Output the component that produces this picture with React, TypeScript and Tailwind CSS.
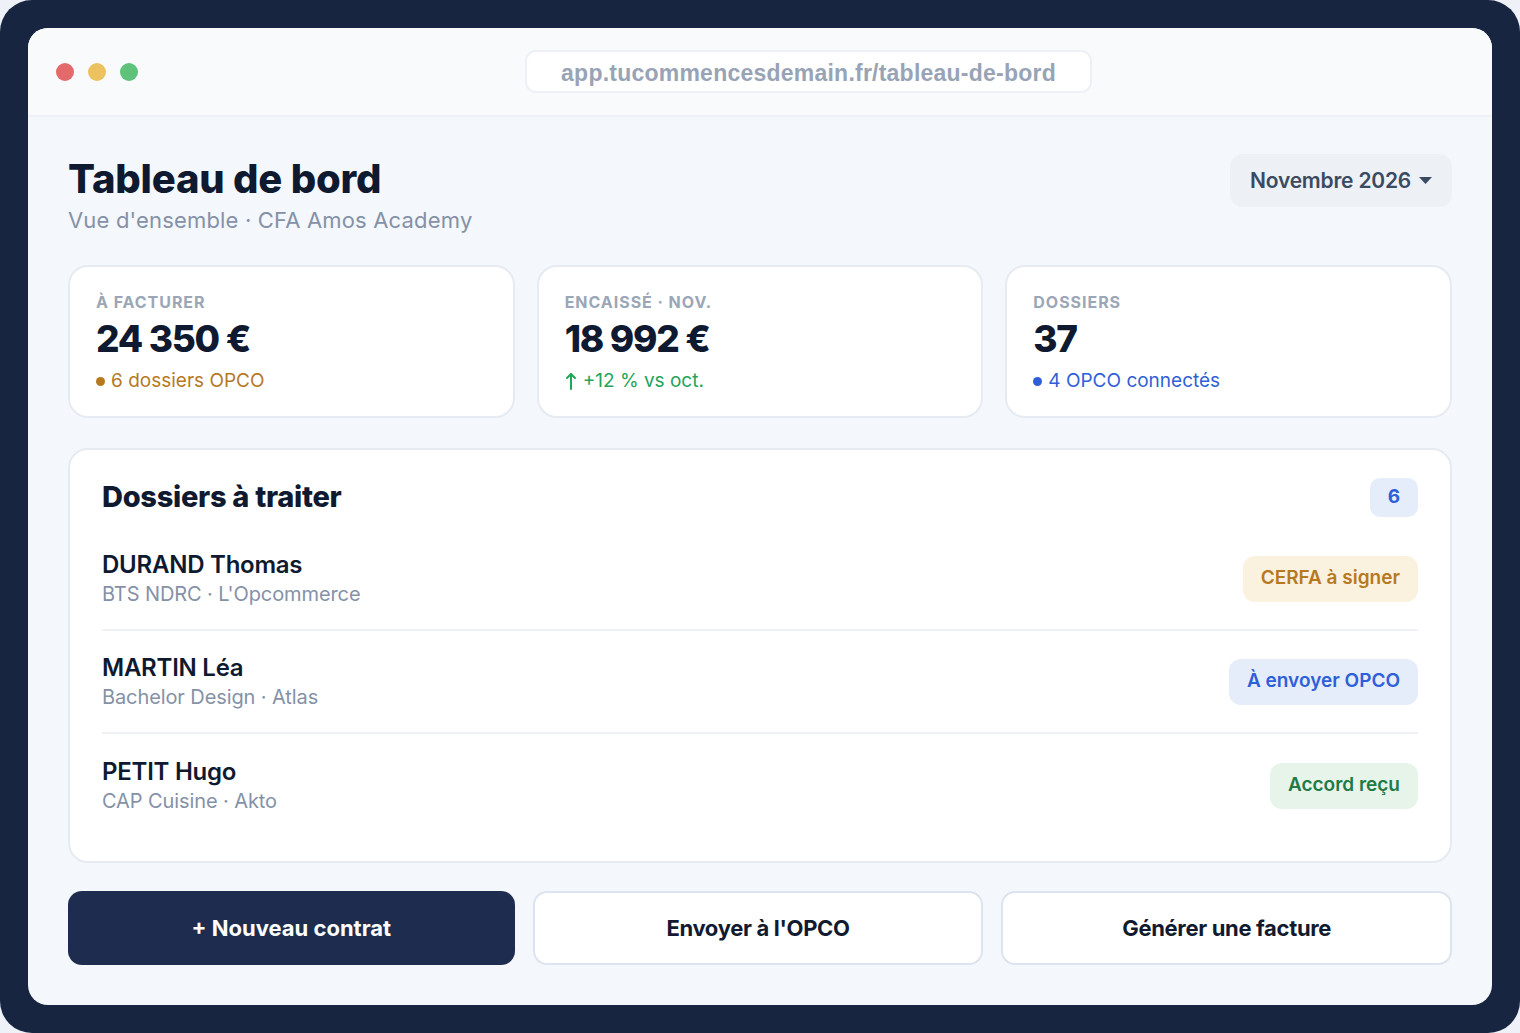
import React from "react";

const sans = { fontFamily: "Inter, 'Noto Sans', sans-serif" } as const;

type Row = { name: string; sub: string; label: string; tone: "amber" | "blue" | "green" };

const rows: Row[] = [
  { name: "DURAND Thomas", sub: "BTS NDRC · L'Opcommerce", label: "CERFA à signer", tone: "amber" },
  { name: "MARTIN Léa", sub: "Bachelor Design · Atlas", label: "À envoyer OPCO", tone: "blue" },
  { name: "PETIT Hugo", sub: "CAP Cuisine · Akto", label: "Accord reçu", tone: "green" },
];

const toneClass: Record<Row["tone"], string> = {
  amber: "bg-[#fbf1df] text-[#b7791f]",
  blue: "bg-[#e5edfb] text-[#2f5fd8]",
  green: "bg-[#e6f4ea] text-[#1f7a46]",
};

function StatCard({
  label,
  value,
  note,
  noteClass,
  icon,
}: {
  label: string;
  value: string;
  note: string;
  noteClass: string;
  icon: React.ReactNode;
}) {
  return (
    <div className="flex-1 h-[153px] rounded-[20px] border-2 border-[#e6ebf2] bg-white pl-[26px] pt-[24px]">
      <div className="text-[16px] font-bold uppercase tracking-[0.06em] leading-[22px] text-[#9ba6b6]">{label}</div>
      <div className="mt-[5px] text-[37px] font-extrabold leading-[42px] tracking-[-0.035em] text-[#0f1a30]">{value}</div>
      <div className={`mt-[9px] flex items-center gap-[6px] text-[19px] leading-[24px] ${noteClass}`}>
        {icon}
        <span>{note}</span>
      </div>
    </div>
  );
}

const Dot = ({ color }: { color: string }) => (
  <span className={`inline-block h-[9px] w-[9px] rounded-full ${color}`} />
);

const ArrowUp = () => (
  <svg width="12" height="18" viewBox="0 0 12 18" fill="none" stroke="currentColor" strokeWidth="2" strokeLinecap="round" strokeLinejoin="round">
    <path d="M6 17V2" />
    <path d="M2 6l4-4 4 4" />
  </svg>
);

export default function App() {
  return (
    <div className="h-[1033px] w-[1520px] bg-[#eef2f8]" style={sans}>
      <div className="h-full w-full rounded-[32px] bg-[#182541] p-[28px]">
        <div className="flex h-full flex-col overflow-hidden rounded-[20px] bg-[#f4f7fc]">
          {/* window chrome */}
          <div className="relative flex h-[89px] shrink-0 items-center border-b-2 border-[#edf1f6] bg-[#f8fafc] px-[28px]">
            <div className="flex gap-[14px]">
              <span className="h-[18px] w-[18px] rounded-full bg-[#e36a6a]" />
              <span className="h-[18px] w-[18px] rounded-full bg-[#ecc15f]" />
              <span className="h-[18px] w-[18px] rounded-full bg-[#5fc27a]" />
            </div>
            <div className="absolute left-[497px] top-[22px] flex h-[43px] w-[567px] items-center justify-center rounded-[11px] border-2 border-[#edf1f6] bg-white pt-[3px]">
              <span
                className="text-[23px] font-bold tracking-[0.01em] text-[#98a3b5]"
                style={{ fontFamily: "'Liberation Sans', Arial, sans-serif" }}
              >
                app.tucommencesdemain.fr/tableau-de-bord
              </span>
            </div>
          </div>

          {/* page body */}
          <div className="flex flex-1 flex-col px-[40px] pt-[37px]">
            <div className="flex items-start justify-between">
              <div>
                <h1 className="text-[40px] font-extrabold leading-[50px] tracking-[-0.005em] text-[#0f1a30]">Tableau de bord</h1>
                <p className="mt-[2px] text-[22px] leading-[28px] tracking-[0.008em] text-[#8591a7]">Vue d'ensemble · CFA Amos Academy</p>
              </div>
              <button className="flex h-[53px] items-center gap-[8px] rounded-[13px] bg-[#edf1f6] px-[20px] text-[21px] font-semibold tracking-[-0.01em] text-[#3b4a63]">
                Novembre 2026
                <svg width="13" height="8" viewBox="0 0 13 8">
                  <path d="M0 0h13L6.5 7z" fill="currentColor" />
                </svg>
              </button>
            </div>

            <div className="mt-[31px] flex gap-[22px]">
              <StatCard
                label="À facturer"
                value="24 350 €"
                note="6 dossiers OPCO"
                noteClass="text-[#b7791f]"
                icon={<Dot color="bg-[#b7791f]" />}
              />
              <StatCard
                label="Encaissé · Nov."
                value="18 992 €"
                note="+12 % vs oct."
                noteClass="text-[#22a55a]"
                icon={<ArrowUp />}
              />
              <StatCard
                label="Dossiers"
                value="37"
                note="4 OPCO connectés"
                noteClass="text-[#2f5fd8]"
                icon={<Dot color="bg-[#2f5fd8]" />}
              />
            </div>

            <div className="mt-[30px] h-[415px] rounded-[20px] border-2 border-[#e6ebf2] bg-white px-[32px] pt-[27px]">
              <div className="flex items-center justify-between">
                <h2 className="text-[29px] font-extrabold leading-[40px] tracking-[-0.01em] text-[#0f1a30]">Dossiers à traiter</h2>
                <span className="flex h-[39px] w-[48px] items-center justify-center rounded-[10px] bg-[#e5edfb] text-[19px] font-bold text-[#2f5fd8]">6</span>
              </div>
              <div className="mt-[11px]">
                {rows.map((r, i) => (
                  <div
                    key={r.name}
                    className={`flex h-[103px] items-center justify-between ${i < rows.length - 1 ? "border-b-2 border-[#eef2f7]" : ""}`}
                  >
                    <div>
                      <div className="text-[24px] font-semibold leading-[31px] tracking-[-0.01em] text-[#0f1a30]">{r.name}</div>
                      <div className="text-[20px] leading-[28px] tracking-[-0.005em] text-[#8591a7]">{r.sub}</div>
                    </div>
                    <span className={`flex h-[46px] items-center rounded-[12px] px-[18px] text-[19px] font-semibold ${toneClass[r.tone]}`}>
                      {r.label}
                    </span>
                  </div>
                ))}
              </div>
            </div>

            <div className="mt-[28px] flex gap-[18px]">
              <button className="h-[74px] flex-1 rounded-[14px] bg-[#1e2d4f] text-[22px] font-bold text-white">+ Nouveau contrat</button>
              <button className="h-[74px] flex-1 rounded-[14px] border-2 border-[#dbe4ef] bg-white text-[22px] font-bold tracking-[-0.015em] text-[#111a2e]">Envoyer à l'OPCO</button>
              <button className="h-[74px] flex-1 rounded-[14px] border-2 border-[#dbe4ef] bg-white text-[22px] font-bold tracking-[-0.015em] text-[#111a2e]">Générer une facture</button>
            </div>
          </div>
        </div>
      </div>
    </div>
  );
}
